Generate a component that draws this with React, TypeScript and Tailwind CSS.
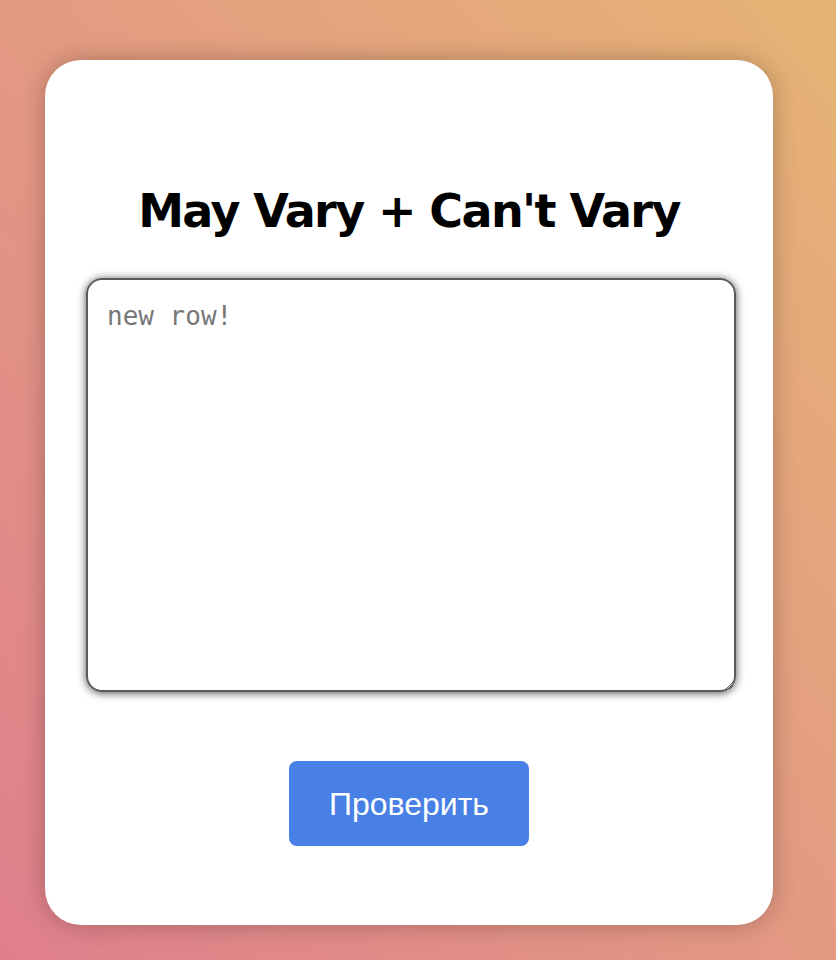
export default function App() {
  return (
    <div className="min-h-screen w-full bg-linear-to-tr from-[#df7f8c] to-[#e6b474] pt-[60px] pl-[45px] pb-[35px]">
      <div className="w-[728px] h-[865px] bg-white rounded-[36px] shadow-[0_0_24px_rgba(0,0,0,0.25)] flex flex-col items-center pt-[122px]">
        <h1 className="font-['DejaVu_Sans',Verdana,sans-serif] font-bold text-[46px] leading-[58px] tracking-[-1.6px] text-black">
          May Vary + Can't Vary
        </h1>
        <textarea
          className="mt-[38px] ml-[4px] w-[650px] h-[414px] border-2 border-[#5a5a5a] rounded-[16px] shadow-[0_1px_9px_rgba(0,0,0,0.7)] px-[19px] py-[17px] font-['DejaVu_Sans_Mono',Menlo,monospace] text-[26px] text-black placeholder:text-[#777] outline-none"
          placeholder="new row!"
        />
        <button className="mt-[69px] w-[240px] h-[85px] rounded-[8px] bg-[#4880e5] text-white font-['Liberation_Sans',Arial,sans-serif] text-[32px]">
          Проверить
        </button>
      </div>
    </div>
  );
}
